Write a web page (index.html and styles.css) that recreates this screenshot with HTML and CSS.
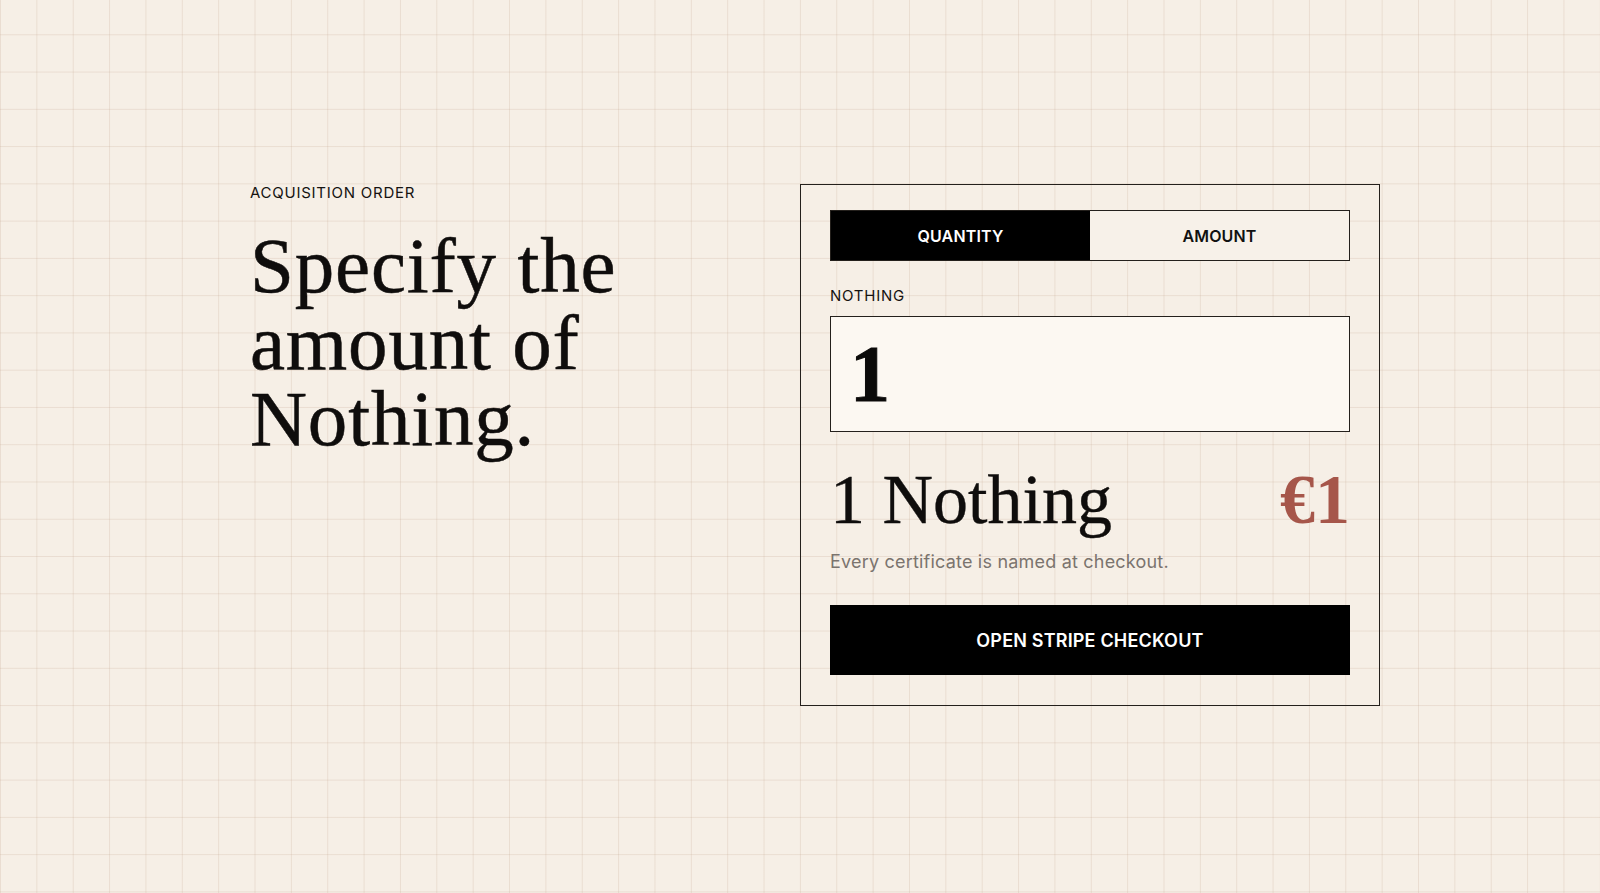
FILE: index.html
```html
<!DOCTYPE html>
<html lang="en">
<head>
<meta charset="utf-8">
<title>Acquisition Order</title>
<link rel="stylesheet" href="styles.css">
</head>
<body>
<main class="page">
  <section class="intro">
    <p class="eyebrow">ACQUISITION ORDER</p>
    <h1 class="headline">Specify the<br>amount of<br>Nothing.</h1>
  </section>
  <section class="card">
    <div class="tabs">
      <button class="tab tab-active" type="button">QUANTITY</button>
      <button class="tab" type="button">AMOUNT</button>
    </div>
    <label class="field-label" for="qty">NOTHING</label>
    <div class="field">
      <input id="qty" class="field-input" type="text" value="1">
    </div>
    <div class="summary">
      <span class="summary-qty">1 Nothing</span>
      <span class="summary-price">€1</span>
    </div>
    <p class="note">Every certificate is named at checkout.</p>
    <button class="checkout" type="button">OPEN STRIPE CHECKOUT</button>
  </section>
</main>
</body>
</html>
```
FILE: styles.css
```css
html, body {
  margin: 0;
  padding: 0;
}

body {
  min-height: 100vh;
  background-color: #f6efe6;
  background-image:
    linear-gradient(to right, rgba(200, 170, 150, 0.26) 1px, transparent 1px),
    linear-gradient(to bottom, rgba(200, 170, 150, 0.26) 1px, transparent 1px);
  background-size: 36.364px 37.27px;
  background-position: 0 34.3px;
  color: #121010;
  font-family: Inter, "Liberation Sans", sans-serif;
}

.page {
  display: grid;
  grid-template-columns: 550px 580px;
  align-items: start;
  padding: 184px 0 0 250px;
}

.eyebrow {
  margin: 0;
  font-size: 15px;
  line-height: 17px;
  letter-spacing: 0.05em;
  color: #151311;
}

.headline {
  margin: 27px 0 0;
  font-family: "Liberation Serif", "Times New Roman", serif;
  font-weight: 400;
  font-size: 79px;
  line-height: 76.5px;
  letter-spacing: 0.8px;
  -webkit-text-stroke: 0.5px #0f0d0c;
  color: #0f0d0c;
}

.card {
  box-sizing: border-box;
  width: 580px;
  border: 1px solid #24201c;
  padding: 25px 29px 30px;
  display: flex;
  flex-direction: column;
}

.tabs {
  display: grid;
  grid-template-columns: 1fr 1fr;
  height: 51px;
  box-sizing: border-box;
  border: 1px solid #24201c;
}

.tab {
  border: 0;
  margin: 0;
  padding: 0;
  font-family: Inter, "Liberation Sans", sans-serif;
  font-weight: 600;
  font-size: 16px;
  letter-spacing: 0.01em;
  background: #f7f1e9;
  color: #111;
}

.tab-active {
  background: #000;
  color: #fff;
}

.field-label {
  margin-top: 26px;
  font-size: 15px;
  line-height: 18px;
  letter-spacing: 0.05em;
  color: #151311;
}

.field {
  margin-top: 11px;
  height: 116px;
  box-sizing: border-box;
  border: 1px solid #24201c;
  background: #fcf8f2;
  display: flex;
  align-items: center;
}

.field-input {
  width: 100%;
  border: 0;
  outline: none;
  background: transparent;
  padding: 0 0 0 19px;
  margin: 0;
  font-family: "Liberation Serif", "Times New Roman", serif;
  font-weight: 700;
  font-size: 80px;
  line-height: 1;
  -webkit-text-stroke: 1px #0b0a09;
  color: #0b0a09;
}

.summary {
  margin-top: 33px;
  display: flex;
  justify-content: space-between;
  align-items: baseline;
  font-family: "Liberation Serif", "Times New Roman", serif;
  font-size: 70px;
  line-height: 70px;
}

.summary-qty {
  font-weight: 400;
  -webkit-text-stroke: 0.4px #0f0d0c;
  color: #0f0d0c;
}

.summary-price {
  font-weight: 700;
  color: #a6564a;
}

.note {
  margin: 17px 0 0;
  font-size: 18px;
  line-height: 20px;
  letter-spacing: 0.2px;
  color: #7b746e;
}

.checkout {
  margin-top: 33px;
  height: 70px;
  border: 0;
  padding: 0;
  background: #000;
  color: #fff;
  font-family: Inter, "Liberation Sans", sans-serif;
  font-weight: 600;
  font-size: 18px;
  letter-spacing: 0.01em;
}
```
